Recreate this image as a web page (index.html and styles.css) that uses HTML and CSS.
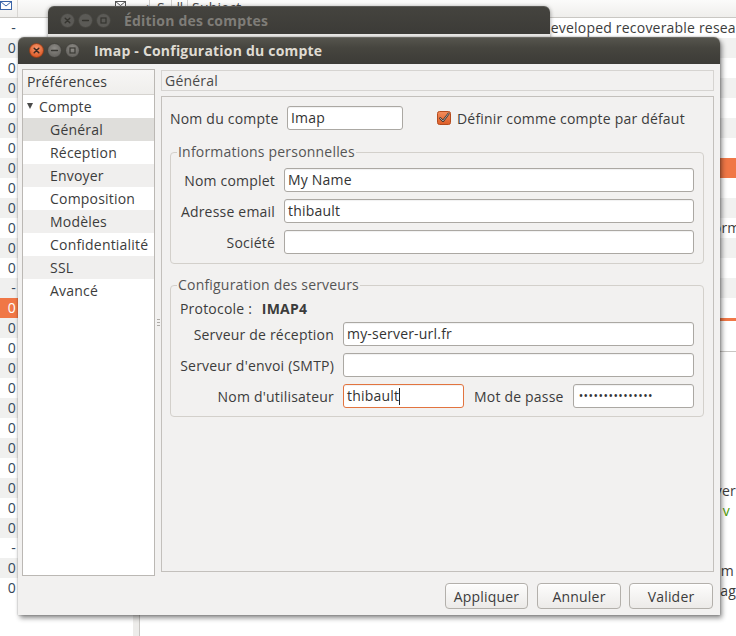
FILE: index.html
```html
<!DOCTYPE html>
<html lang="fr">
<head>
<meta charset="utf-8">
<title>Imap - Configuration du compte</title>
<link rel="stylesheet" href="styles.css">
</head>
<body>
<div class="desktop">
  <div class="app">
    <div class="app-header">
      <div class="hc hc-env"><svg width="12" height="10" viewBox="0 0 12 10"><rect x="0.5" y="0.5" width="11" height="8" fill="#fff" stroke="#3a64a8"/><path d="M0.5 0.5 L6 5 L11.5 0.5" fill="none" stroke="#3a64a8"/></svg></div>
      <div class="hc hc-blank"></div>
      <div class="hc hc-env2"><svg width="11" height="9" viewBox="0 0 11 9"><rect x="0.5" y="0.5" width="10" height="8" fill="#fff" stroke="#555"/><path d="M0.5 0.5 L5.5 4.5 L10.5 0.5" fill="none" stroke="#555"/></svg></div>
      <div class="hc hc-mark">✓</div>
      <div class="hc hc-s">S</div>
      <div class="hc hc-att">ǁ</div>
      <div class="hc hc-subj">Subject</div>
    </div>
    <div class="app-main">
      <div class="folders">
        <div class="frow"><span class="num">-</span></div>
        <div class="frow"><span class="num">0</span></div>
        <div class="frow"><span class="num">0</span></div>
        <div class="frow"><span class="num">0</span></div>
        <div class="frow"><span class="num">0</span></div>
        <div class="frow"><span class="num">0</span></div>
        <div class="frow"><span class="num">0</span></div>
        <div class="frow"><span class="num">0</span></div>
        <div class="frow"><span class="num">0</span></div>
        <div class="frow"><span class="num">0</span></div>
        <div class="frow"><span class="num">0</span></div>
        <div class="frow"><span class="num">0</span></div>
        <div class="frow"><span class="num">0</span></div>
        <div class="frow"><span class="num">-</span></div>
        <div class="frow sel"><span class="num">0</span></div>
        <div class="frow"><span class="num">0</span></div>
        <div class="frow"><span class="num">0</span></div>
        <div class="frow"><span class="num">0</span></div>
        <div class="frow"><span class="num">0</span></div>
        <div class="frow"><span class="num">0</span></div>
        <div class="frow"><span class="num">0</span></div>
        <div class="frow"><span class="num">0</span></div>
        <div class="frow"><span class="num">0</span></div>
        <div class="frow"><span class="num">0</span></div>
        <div class="frow"><span class="num">0</span></div>
        <div class="frow"><span class="num">0</span></div>
        <div class="frow"><span class="num">-</span></div>
        <div class="frow"><span class="num">0</span></div>
        <div class="frow"><span class="num">0</span></div>
      </div>
      <div class="splitter"></div>
      <div class="messages">
        <div class="mlist">
          <div class="mrow"><span class="subj subj-a">developed recoverable research</span></div>
          <div class="mrow"></div>
          <div class="mrow"></div>
          <div class="mrow"></div>
          <div class="mrow"></div>
          <div class="mrow"></div>
          <div class="mrow"></div>
          <div class="mrow msel"></div>
          <div class="mrow"></div>
          <div class="mrow"></div>
          <div class="mrow"><span class="subj subj-b">Information</span></div>
          <div class="mrow"></div>
          <div class="mrow"></div>
          <div class="mrow"></div>
          <div class="mrow"></div>
        </div>
        <div class="mbar"></div>
        <div class="mhead"></div>
        <div class="mview">
          <div class="vline">server</div>
          <div class="vline green">v</div>
          <div class="vline"></div>
          <div class="vline"></div>
          <div class="vline pad2">m</div>
          <div class="vline">pag</div>
        </div>
      </div>
    </div>
  </div>

  <div class="window win-back">
    <div class="titlebar tb-inactive">
      <span class="wb"><svg width="15" height="15" viewBox="0 0 15 15"><circle cx="7.5" cy="7.5" r="7" fill="#5b5a56" stroke="#45443f" stroke-width="0.8"/><path d="M5.2 5.2 L9.8 9.8 M9.8 5.2 L5.2 9.8" stroke="#35342f" stroke-width="1.4" stroke-linecap="round"/></svg></span>
      <span class="wb"><svg width="15" height="15" viewBox="0 0 15 15"><circle cx="7.5" cy="7.5" r="7" fill="#5b5a56" stroke="#45443f" stroke-width="0.8"/><path d="M4.6 7.5 H10.4" stroke="#35342f" stroke-width="1.4" stroke-linecap="round"/></svg></span>
      <span class="wb"><svg width="15" height="15" viewBox="0 0 15 15"><circle cx="7.5" cy="7.5" r="7" fill="#5b5a56" stroke="#45443f" stroke-width="0.8"/><rect x="5" y="5" width="5" height="5" fill="none" stroke="#35342f" stroke-width="1.2"/></svg></span>
      <span class="wtitle">Édition des comptes</span>
    </div>
  </div>

  <div class="window win-front">
    <div class="titlebar">
      <span class="wb"><svg width="15" height="15" viewBox="0 0 15 15"><defs><radialGradient id="cg" cx="50%" cy="35%" r="70%"><stop offset="0" stop-color="#f89a70"/><stop offset="1" stop-color="#d8501c"/></radialGradient></defs><circle cx="7.5" cy="7.5" r="7" fill="url(#cg)" stroke="#8f3b16" stroke-width="0.8"/><path d="M5.2 5.2 L9.8 9.8 M9.8 5.2 L5.2 9.8" stroke="#3b2a22" stroke-width="1.5" stroke-linecap="round"/></svg></span>
      <span class="wb"><svg width="15" height="15" viewBox="0 0 15 15"><defs><radialGradient id="gg" cx="50%" cy="35%" r="70%"><stop offset="0" stop-color="#8e8c87"/><stop offset="1" stop-color="#5f5d59"/></radialGradient></defs><circle cx="7.5" cy="7.5" r="7" fill="url(#gg)" stroke="#3d3c38" stroke-width="0.8"/><path d="M4.6 7.5 H10.4" stroke="#3a3934" stroke-width="1.5" stroke-linecap="round"/></svg></span>
      <span class="wb"><svg width="15" height="15" viewBox="0 0 15 15"><circle cx="7.5" cy="7.5" r="7" fill="url(#gg)" stroke="#3d3c38" stroke-width="0.8"/><rect x="5" y="5" width="5" height="5" fill="none" stroke="#3a3934" stroke-width="1.2"/></svg></span>
      <span class="wtitle">Imap - Configuration du compte</span>
    </div>
    <div class="dlg-body">
      <div class="dlg-main">
        <div class="tree">
          <div class="tree-head">Préférences</div>
          <ul class="tree-list">
            <li class="ti ti-parent"><span class="tri"></span>Compte</li>
            <li class="ti ti-child sel">Général</li>
            <li class="ti ti-child">Réception</li>
            <li class="ti ti-child alt">Envoyer</li>
            <li class="ti ti-child">Composition</li>
            <li class="ti ti-child alt">Modèles</li>
            <li class="ti ti-child">Confidentialité</li>
            <li class="ti ti-child alt">SSL</li>
            <li class="ti ti-child">Avancé</li>
          </ul>
        </div>
        <div class="pane-grip"><span></span><span></span><span></span></div>
        <div class="page">
          <div class="page-title">Général</div>
          <div class="page-frame">
            <div class="acct-row">
              <span class="acct-label">Nom du compte</span>
              <div class="entry entry-acct">Imap</div>
              <label class="check">
                <svg width="14" height="14" viewBox="0 0 14 14"><defs><linearGradient id="chk" x1="0" y1="0" x2="0" y2="1"><stop offset="0" stop-color="#f38d5c"/><stop offset="1" stop-color="#dd5d27"/></linearGradient></defs><rect x="0.5" y="0.5" width="13" height="13" rx="2" fill="url(#chk)" stroke="#b44c1e"/><path d="M3.2 7.2 L6 10 L11.6 2.6" fill="none" stroke="#3e3530" stroke-width="2.1" stroke-linecap="round" stroke-linejoin="round"/><path d="M3.2 7.2 L6 10 L11.6 2.6" fill="none" stroke="#f3e9e3" stroke-width="0.6" stroke-linecap="round" stroke-linejoin="round"/></svg>
                <span>Définir comme compte par défaut</span>
              </label>
            </div>

            <fieldset class="group g1">
              <legend>Informations personnelles</legend>
              <div class="form-grid grid1">
                <span class="flabel">Nom complet</span><div class="entry">My Name</div>
                <span class="flabel">Adresse email</span><div class="entry">thibault</div>
                <span class="flabel">Société</span><div class="entry"></div>
              </div>
            </fieldset>

            <fieldset class="group g2">
              <legend>Configuration des serveurs</legend>
              <div class="proto">Protocole : <b>IMAP4</b></div>
              <div class="form-grid grid2">
                <span class="flabel">Serveur de réception</span><div class="entry">my-server-url.fr</div>
                <span class="flabel">Serveur d'envoi (SMTP)</span><div class="entry"></div>
                <span class="flabel">Nom d'utilisateur</span>
                <div class="userpass">
                  <div class="entry entry-user focus">thibault<span class="caret"></span></div>
                  <span class="pw-label">Mot de passe</span>
                  <div class="entry entry-pw"><span class="dots">•••••••••••••••</span></div>
                </div>
              </div>
            </fieldset>
          </div>
        </div>
      </div>
      <div class="dlg-buttons">
        <button class="btn btn-apply">Appliquer</button>
        <button class="btn">Annuler</button>
        <button class="btn">Valider</button>
      </div>
    </div>
  </div>
</div>
</body>
</html>
```
FILE: styles.css
```css
* { box-sizing: border-box; }
html, body { margin: 0; padding: 0; }
body {
  width: 736px; height: 636px; overflow: hidden;
  font-family: "Open Sans", "Noto Sans", "DejaVu Sans", sans-serif;
  font-size: 14px; letter-spacing: 0.2px; color: #3c3c3c; background: #fff;
}
.desktop { position: relative; width: 736px; height: 636px; overflow: hidden; }

/* background mail client */
.app { display: flex; flex-direction: column; height: 100%; }
.app-header {
  height: 18px; display: flex; flex: none;
  border-bottom: 1px solid #c9c7c3;
  background: linear-gradient(#fbfbfa, #efeeec);
  font-size: 14px; line-height: 15px; color: #4a4a4a;
}
.hc { flex: none; height: 17px; }
.hc-env { width: 18px; padding: 1px 0 0 0; border-right: 1px solid #d9d7d4; }
.hc-env svg, .hc-env2 svg { display: block; }
.hc-blank { width: 97px; }
.hc-env2 { width: 26px; padding: 1px 0 0 0; }
.hc-mark { width: 9px; border-right: 1px solid #d0cecb; font-size: 11px; }
.hc-s { width: 22px; padding-left: 7px; border-right: 1px solid #d0cecb; }
.hc-att { width: 16px; padding-left: 4px; border-right: 1px solid #d0cecb; }
.hc-subj { flex: 1; padding-left: 4px; }

.app-main { flex: 1; display: flex; }
.folders { width: 133px; flex: none; }
.frow { height: 20px; line-height: 20px; color: #33475b; }
.frow:nth-child(even) { background: #f0f0ef; }
.frow.sel { background: #f07746; color: #fff; }
.num { display: inline-block; width: 16px; text-align: right; }
.splitter { width: 7px; flex: none; background: #edecea; border-right: 1px solid #c8c6c3; }
.messages { flex: 1; display: flex; flex-direction: column; min-width: 0; }
.mlist { flex: none; }
.mrow { height: 20px; line-height: 20px; white-space: nowrap; overflow: hidden; }
.mrow:nth-child(even) { background: #f1f1f0; }
.mrow.msel { background: #f07746; }
.subj { display: inline-block; color: #3c3c3c; }
.subj-a { padding-left: 402px; }
.subj-b { padding-left: 555px; }
.mbar { height: 3px; background: #f07746; flex: none; }
.mhead { height: 31px; border-bottom: 1px solid #c8c6c3; flex: none; }
.mview { flex: 1; padding-top: 129px; }
.vline { height: 20px; line-height: 20px; text-align: right; white-space: nowrap; color: #3c3c3c; }
.vline.green { color: #4e9a06; padding-right: 6px; }
.vline.pad2 { padding-right: 2px; }

/* windows */
.window { position: absolute; background: #f2f1f0; border-radius: 6px 6px 0 0; }
.win-back {
  left: 48px; top: 6px; width: 502px; height: 320px;
  background: #e9e8e6;
  box-shadow: 0 1px 4px rgba(0,0,0,0.45);
}
.win-front {
  left: 18px; top: 37px; width: 702px; height: 578px;
  display: flex; flex-direction: column;
  box-shadow: 2px 3px 5px rgba(0,0,0,0.45), 0 0 2px rgba(0,0,0,0.35);
}
.titlebar {
  flex: none; height: 27px; display: flex; align-items: center; gap: 3px;
  padding-left: 11px;
  border-radius: 6px 6px 0 0;
  background: linear-gradient(#57564f, #46453f 40%, #3c3b37);
  box-shadow: inset 0 1px 0 rgba(255,255,255,0.12);
}
.tb-inactive {
  height: 28px; padding-left: 12px;
  background: linear-gradient(#45443f, #3c3b37);
}
.wb { width: 15px; height: 15px; flex: none; }
.wb svg { display: block; }
.wtitle {
  margin-left: 11px; font-weight: bold; font-size: 14px;
  color: #dfdbd2; white-space: nowrap;
}
.tb-inactive .wtitle { color: #7f7d78; margin-left: 10px; }

.dlg-body { flex: 1; display: flex; flex-direction: column; padding: 5px 6px 6px 4px; }
.dlg-main { flex: 1; display: flex; min-height: 0; }

.tree { width: 133px; flex: none; background: #fff; border: 1px solid #bbb8b4; overflow: hidden; }
.tree-head {
  height: 25px; line-height: 24px; padding-left: 4px;
  background: linear-gradient(#f7f6f5, #efeeec);
  border-bottom: 1px solid #d5d3cf; color: #3c3c3c;
}
.tree-list { list-style: none; margin: 0; padding: 0; }
.ti { height: 23px; line-height: 23px; white-space: nowrap; }
.ti-parent { padding-left: 4px; display: flex; align-items: center; }
.tri {
  width: 0; height: 0; margin-right: 6px;
  border-left: 3.5px solid transparent; border-right: 3.5px solid transparent;
  border-top: 6px solid #4a4a4a; position: relative; top: -1px;
}
.ti-child { padding-left: 27px; }
.ti.alt { background: #f0efee; }
.ti.sel { background: #dfdedb; }

.pane-grip { width: 6px; flex: none; display: flex; flex-direction: column; justify-content: center; align-items: center; gap: 2px; }
.pane-grip span { width: 3px; height: 1px; background: #aeaba7; }

.page { flex: 1; display: flex; flex-direction: column; padding: 1px 0 4px 0; min-width: 0; }
.page-title { height: 21px; flex: none; border: 1px solid #d6d4d1; line-height: 19px; padding-left: 3px; color: #4a4a4a; margin-bottom: 5px; }
.page-frame { flex: 1; border: 1px solid #c3c0bc; padding: 9px 9px 0 8px; }

.acct-row { display: flex; align-items: center; height: 24px; }
.acct-label { width: 117px; flex: none; white-space: nowrap; }
.entry-acct { width: 116px; flex: none; }
.check { margin-left: 34px; display: flex; align-items: center; gap: 6px; white-space: nowrap; }
.check svg { display: block; }

.entry {
  height: 24px; border: 1px solid #aba8a3; border-radius: 3px; background: #fff;
  padding: 0 3px; line-height: 22px; white-space: nowrap; overflow: hidden; color: #333;
  box-shadow: inset 0 1px 1px rgba(0,0,0,0.06);
}
.entry.focus { border-color: #e2743f; display: flex; align-items: center; }
.caret { display: inline-block; width: 1px; height: 17px; background: #222; margin-left: 0; }
.dots { font-size: 12px; letter-spacing: 0.45px; color: #333; position: relative; top: -1px; left: 2px; }

.group {
  margin: 13px 0 0 0; padding: 7px 9px 9px 7px;
  border: 1px solid #d3d0cb; border-radius: 4px; min-width: 0;
}
.group legend { padding: 0 1px; margin-left: -1px; line-height: 18px; color: #555; }
.g2 { margin-top: 12px; padding-top: 5px; padding-bottom: 8px; }

.form-grid { display: grid; column-gap: 9px; row-gap: 7px; align-items: center; }
.grid1 { grid-template-columns: 97px 1fr; }
.grid2 { grid-template-columns: 156px 1fr; }
.flabel { text-align: right; white-space: nowrap; }

.proto { line-height: 19px; margin: 0 0 4px 2px; }
.proto b { margin-left: 6px; }

.userpass { display: flex; align-items: center; }
.entry-user { width: 121px; flex: none; }
.pw-label { margin-left: 10px; margin-right: 9px; white-space: nowrap; }
.entry-pw { flex: 1; }

.dlg-buttons { flex: none; display: flex; justify-content: flex-end; gap: 8px; margin-top: 7px; padding-right: 1px; }
.btn {
  height: 26px; width: 84px; padding: 0;
  font-family: inherit; font-size: 14px; letter-spacing: 0.2px; color: #3c3c3c;
  border: 1px solid #b3b0ab; border-radius: 4px;
  background: linear-gradient(#fdfdfc, #eceae8);
  box-shadow: inset 0 1px 0 #fff;
}
.btn-apply { width: 83px; margin-right: 1px; }
```
